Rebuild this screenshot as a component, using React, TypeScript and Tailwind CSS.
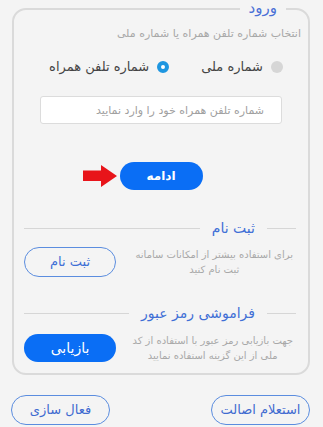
import React from "react";

function Divider({ title }: { title: string }) {
  return (
    <div className="flex items-center pl-[10px] pr-[12px]">
      <div className="w-[29px] h-px bg-[#d6d6d6]" />
      <div className="mx-[12px] text-[14px] leading-[18px] text-[#3f6fd6]">{title}</div>
      <div className="flex-1 h-px bg-[#d6d6d6]" />
    </div>
  );
}

export default function App() {
  return (
    <div
      dir="rtl"
      className="w-[323px] h-[427px] overflow-hidden bg-[#f4f4f4] font-['DejaVu_Sans',sans-serif]"
    >
      <fieldset className="ml-[12px] mr-[13px] m-0 border-2 border-[#dadada] rounded-[14px] px-0 pt-0 pb-[10px]">
        <legend className="mr-[22px] px-[9px] text-[15px] leading-[17px] text-[#4a70d6]">ورود</legend>

        <div className="mt-[9px] pr-[7px] text-[11px] leading-[16px] text-[#a8a8a8]">
          انتخاب شماره تلفن همراه یا شماره ملی
        </div>

        <div className="mt-[15px] h-[20px] flex items-center justify-center pl-[10px] gap-[32px]">
          <label className="flex items-center gap-[8px]">
            <span className="w-[12px] h-[12px] rounded-full bg-[#d6d6d6]" />
            <span className="text-[13px] leading-[20px] text-[#444]">شماره ملی</span>
          </label>
          <label className="flex items-center gap-[8px]">
            <span className="w-[12px] h-[12px] rounded-full border-[4px] border-[#1e96e0] bg-white" />
            <span className="text-[13px] leading-[20px] text-[#444]">شماره تلفن همراه</span>
          </label>
        </div>

        <div className="mt-[19px] flex justify-center">
          <input
            dir="rtl"
            placeholder="شماره تلفن همراه خود را وارد نمایید"
            className="w-[242px] h-[28px] bg-white border border-[#dcdcdc] rounded-[3px] pr-[17px] text-[11px] text-[#555] placeholder:text-[#a0a0a0] outline-none"
          />
        </div>

        <div className="mt-[38px] flex justify-center items-center">
          <button className="w-[83px] h-[28px] rounded-full bg-[#0a6ef5] text-white text-[12px] font-bold">
            ادامه
          </button>
          <svg width="35" height="22" viewBox="0 0 35 22" className="mr-[2px] ml-[-37px]" aria-hidden>
            <polygon points="0,5.5 18,5.5 18,0 34,11 18,22 18,16 0,16" fill="#e8141a" />
          </svg>
        </div>

        <div className="mt-[29px]">
          <Divider title="ثبت نام" />
        </div>

        <div className="mt-[10px] flex items-center justify-between pr-[15px] pl-[10px]">
          <div className="whitespace-nowrap text-center text-[10px] leading-[15px] text-[#a8a8a8]">
            برای استفاده بیشتر از امکانات سامانه
            <br />
            ثبت نام کنید
          </div>
          <button className="w-[92px] h-[30px] rounded-full border-[1.5px] border-[#5b8ddf] text-[13px] text-[#3d6fd6]">
            ثبت نام
          </button>
        </div>

        <div className="mt-[27px]">
          <Divider title="فراموشی رمز عبور" />
        </div>

        <div className="mt-[11px] flex items-center justify-between pr-[15px] pl-[10px]">
          <div className="whitespace-nowrap text-center text-[10px] leading-[15px] text-[#a8a8a8]">
            جهت بازیابی رمز عبور با استفاده از کد
            <br />
            ملی از این گزینه استفاده نمایید
          </div>
          <button className="w-[92px] h-[28px] rounded-full bg-[#0a6ef5] text-white text-[14px]">
            بازیابی
          </button>
        </div>
      </fieldset>

      <div className="mt-[20px] flex justify-between pr-[13px] pl-[11px]">
        <button className="w-[99px] h-[30px] rounded-full border-[1.5px] border-[#5b8ddf] text-[13px] text-[#3f6bd0]">
          استعلام اصالت
        </button>
        <button className="w-[99px] h-[30px] rounded-full border-[1.5px] border-[#5b8ddf] text-[13px] text-[#3f6bd0]">
          فعال سازی
        </button>
      </div>
    </div>
  );
}
